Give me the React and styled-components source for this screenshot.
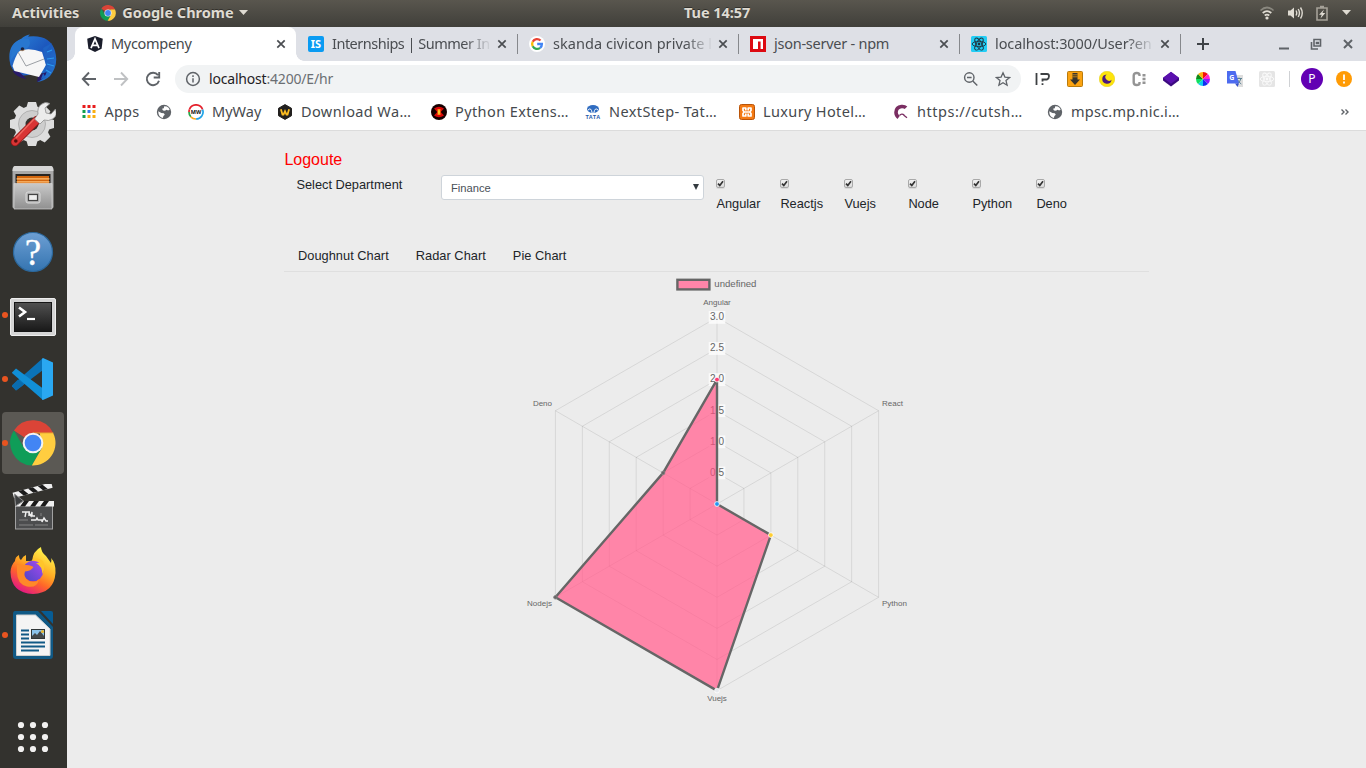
import React from "react";
import styled, { createGlobalStyle, css } from "styled-components";

const UI = '"Noto Sans", "Open Sans", sans-serif';
const ARIAL = '"Liberation Sans", Arial, sans-serif';

const Global = createGlobalStyle`
  * { box-sizing: border-box; }
  html, body { margin: 0; padding: 0; overflow: hidden; }
  svg { display: block; flex: none; }
`;

const Desktop = styled.div`
  width: 1366px;
  height: 768px;
  display: flex;
  flex-direction: column;
  background: #ececec;
  overflow: hidden;
  font-family: ${UI};
`;

/* ---------- system bar ---------- */
const SystemBar = styled.header`
  height: 27px;
  flex: none;
  display: grid;
  grid-template-columns: 672px auto 1fr;
  align-items: center;
  padding: 0 15px 2px 12px;
  background: linear-gradient(#59564e, #403f3a);
  color: #dfdbd2;
  font-weight: 700;
  font-size: 14.5px;
  line-height: 25px;
  text-shadow: 0 -1px 0 rgba(0, 0, 0, 0.4);
`;
const BarLeft = styled.div`
  display: flex;
  align-items: center;
`;
const AppName = styled.span`
  margin: 0 5px 0 6px;
`;
const AppIconSlot = styled.span`
  margin-left: 21px;
`;
const BarRight = styled.div`
  display: flex;
  align-items: center;
  justify-content: flex-end;
  gap: 12px;
`;
const MenuArrow = styled.span`
  margin-left: 2px;
`;
const Clock = styled.span`
  letter-spacing: -0.05px;
`;

const Workspace = styled.div`
  flex: 1;
  display: flex;
  min-height: 0;
`;

/* ---------- dock ---------- */
const Dock = styled.nav`
  width: 67px;
  flex: none;
  display: flex;
  flex-direction: column;
  gap: 2px;
  padding: 1px 3px 1px 2px;
  background: #33322e;
`;
const DockItem = styled.div`
  position: relative;
  height: 62px;
  flex: none;
  display: flex;
  align-items: center;
  justify-content: center;
  padding-top: ${(p) => p.$drop || 0}px;
  border-radius: 4px;
  background: ${(p) => (p.$active ? "#5b5954" : "transparent")};
  ${(p) => p.$last && css`margin-top: auto;`}
`;
const RunDot = styled.i`
  position: absolute;
  left: 0;
  top: 28px;
  width: 6px;
  height: 6px;
  border-radius: 50%;
  background: #e95420;
`;

/* ---------- browser ---------- */
const Browser = styled.main`
  flex: 1;
  min-width: 0;
  display: flex;
  flex-direction: column;
`;
const TabStrip = styled.div`
  height: 34px;
  flex: none;
  display: flex;
  align-items: center;
  padding-left: 8px;
  background: #dee0e6;
`;
const Tab = styled.div`
  position: relative;
  width: 221px;
  height: 34px;
  flex: none;
  display: flex;
  align-items: center;
  padding: 0 9px 0 12px;
  color: #4a4d51;
  ${(p) =>
    p.$active
      ? css`
          background: #fff;
          border-radius: 8px 8px 0 0;
          z-index: 1;
          color: #45494d;
          &::before,
          &::after {
            content: "";
            position: absolute;
            bottom: 0;
            width: 8px;
            height: 8px;
          }
          &::before {
            left: -8px;
            background: radial-gradient(circle at 0 0, transparent 7.5px, #fff 8px);
          }
          &::after {
            right: -8px;
            background: radial-gradient(circle at 100% 0, transparent 7.5px, #fff 8px);
          }
        `
      : css`
          &::after {
            content: "";
            position: absolute;
            right: -1px;
            top: 7px;
            width: 1px;
            height: 20px;
            background: #86888c;
          }
        `}
`;
const TabTitle = styled.span`
  flex: 1;
  min-width: 0;
  margin: 0 3px 0 8px;
  padding-bottom: 2px;
  white-space: nowrap;
  font-size: 14.5px;
  line-height: 22px;
  letter-spacing: ${(p) => p.$track || 0}px;
  ${(p) =>
    p.$fade &&
    css`
      mask-image: linear-gradient(90deg, #000 132px, transparent 160px);
    `}
`;
const NewTab = styled.div`
  margin-left: 16px;
`;
const WindowControls = styled.div`
  display: flex;
  gap: 20px;
  margin: 0 12px 0 auto;
  align-items: center;
`;
const Toolbar = styled.div`
  height: 36px;
  flex: none;
  display: flex;
  align-items: center;
  padding: 0 14px 0 14px;
  background: #fff;
`;
const NavButtons = styled.div`
  display: flex;
  gap: 16px;
  margin-right: 14px;
`;
const Omnibox = styled.div`
  width: 846px;
  height: 28px;
  display: flex;
  align-items: center;
  padding: 0 10px;
  border-radius: 14px;
  background: #f1f3f4;
`;
const Url = styled.span`
  flex: 1;
  margin-left: 8px;
  font-size: 14px;
  line-height: 22px;
  letter-spacing: -0.19px;
  color: #6b6f73;
`;
const Host = styled.b`
  font-weight: 400;
  color: #1f2124;
`;
const OmniActions = styled.div`
  display: flex;
  gap: 16px;
`;
const Extensions = styled.div`
  display: flex;
  gap: 16px;
  margin-left: 14px;
  align-items: center;
`;
const Divider = styled.i`
  width: 1px;
  height: 16px;
  margin: 0 11px 0 14px;
  background: #cfd1d4;
`;
const Avatar = styled.span`
  width: 22px;
  height: 22px;
  border-radius: 50%;
  background: #6200b3;
  color: #fff;
  font-size: 12px;
  line-height: 22px;
  text-align: center;
`;
const Alert = styled.span`
  margin-left: 13px;
`;
const Bookmarks = styled.div`
  height: 34px;
  flex: none;
  display: flex;
  padding: 0 15px 0 13.5px;
  background: #fff;
  border-bottom: 1px solid #dcdcdc;
`;
const Bookmark = styled.div`
  width: ${(p) => p.$w}px;
  height: 30px;
  flex: none;
  display: flex;
  align-items: center;
  gap: 8px;
  color: #45494d;
  font-size: 14.5px;
  white-space: nowrap;
  letter-spacing: ${(p) => p.$track || 0}px;
`;
const BookmarkText = styled.span`
  padding-bottom: 2px;
`;
const More = styled.div`
  margin: 9px 0 0 auto;
`;

/* ---------- page ---------- */
const Page = styled.section`
  width: 864.500px;
  margin-left: 217.400px;
  padding-top: 19px;
  font-family: ${ARIAL};
  color: #212529;
  font-size: 12.8px;
`;
const Logout = styled.a`
  display: block;
  height: 25px;
  font-size: 16px;
  line-height: 20px;
  color: #f00;
`;
const FilterRow = styled.div`
  display: flex;
  height: 67px;
  padding-left: 12px;
`;
const FieldLabel = styled.label`
  width: 144.600px;
  line-height: 19px;
`;
const Select = styled.div`
  width: 263px;
  height: 25px;
  display: flex;
  align-items: center;
  justify-content: space-between;
  padding: 1px 4px 0 9px;
  margin-right: 12.400px;
  background: #fff;
  border: 1px solid #ced4da;
  border-radius: 3px;
  font-size: 11.2px;
  color: #495057;
`;
const Caret = styled.span`
  margin-bottom: 3px;
`;
const Option = styled.div`
  width: 64px;
  padding-top: 4px;
  line-height: 19px;
`;
const Box = styled.span`
  display: block;
  width: 9px;
  height: 9px;
  margin-bottom: 6px;
  border: 1px solid #a9a9a9;
  border-radius: 2px;
  background: linear-gradient(#f1f1f1, #dcdcdc);
  box-shadow: 0 1px 0 rgba(0, 0, 0, 0.08);
`;
const ChartTabs = styled.div`
  display: flex;
  gap: 27px;
  height: 30px;
  padding-left: 13.600px;
  line-height: 28px;
  letter-spacing: 0.03px;
  border-bottom: 1px solid #dfdfdf;
`;
const ChartArea = styled.div`
  margin-left: -0.4px;
`;

/* ---------- small UI glyphs ---------- */
const Line = ({ s = 16, d, c = "#5f6368", w = 2, children, ...r }) => (
  <svg width={s} height={s} viewBox={`0 0 ${s} ${s}`} fill="none" stroke={c} strokeWidth={w} {...r}>
    {d && <path d={d} />}
    {children}
  </svg>
);

const Close = () => <Line s={12} d="M2.300 2.300l7.400 7.400M9.700 2.300l-7.400 7.400" c="#4a4d51" w={1.7} />;

const ChromeLogo = ({ s }) => (
  <svg width={s} height={s} viewBox="0 0 48 48">
    <path d="M24 24 4.1 11A23.5 23.5 0 0 1 45 13.5L24 14z" fill="#db4437" />
    <path d="M4.2 11A23.5 23.5 0 0 0 22.8 47.5L33 29 24 24 14.5 29z" fill="#0f9d58" />
    <path d="M45 13.5A23.5 23.5 0 0 1 22.8 47.5L33.5 29 31 13.5z" fill="#ffcd40" />
    <path d="M24 13.5h21.2" stroke="#e6a52e" strokeWidth="1" />
    <circle cx="24" cy="24" r="10.8" fill="#f4f4f4" />
    <circle cx="24" cy="24" r="8.7" fill="#4285f4" />
  </svg>
);

const Globe = () => (
  <svg width="16" height="16" viewBox="0 0 16 16">
    <circle cx="8" cy="8" r="7.2" fill="#5f6368" />
    <path d="M8.200 2.200l2.600.2q2 1 2.900 3l-1.500 1.200-1.700-.8-1.500 1-2-.3L6 4.800l1.800-.6z" fill="#fff" />
    <path d="M2.200 7.200l3.200 1.700 2.400.3 1 1.500-1.400 1.300-.5 2Q2.300 13.200 2.200 7.200z" fill="#fff" />
  </svg>
);

const ReactMark = ({ bg, fg }) => (
  <svg width="16" height="16" viewBox="0 0 16 16">
    <rect width="16" height="16" rx="1.5" fill={bg} />
    <g fill="none" stroke={fg} strokeWidth=".9">
      <ellipse cx="8" cy="8" rx="6.8" ry="2.7" />
      <ellipse cx="8" cy="8" rx="6.8" ry="2.7" transform="rotate(60 8 8)" />
      <ellipse cx="8" cy="8" rx="6.8" ry="2.7" transform="rotate(120 8 8)" />
    </g>
    <circle cx="8" cy="8" r="1.4" fill={fg} />
  </svg>
);

const Angular = () => (
  <svg width="16" height="16" viewBox="0 0 16 16">
    <path d="M8 0l7.8 2.7-1.2 10L8 16l-6.6-3.3L.2 2.7z" fill="#1a1d2b" />
    <path d="M4 12.2L8 3l4 9.2M5.6 9.4h4.8" fill="none" stroke="#fff" strokeWidth="1.7" />
  </svg>
);
const Internshala = () => (
  <svg width="16" height="16" viewBox="0 0 16 16">
    <rect width="16" height="16" rx="2" fill="#0a9bf2" />
    <text x="8" y="12" fontSize="11" fontWeight="700" textAnchor="middle" fill="#fff" fontFamily="Noto Sans">IS</text>
  </svg>
);
const Google = () => (
  <svg width="16" height="16" viewBox="0 0 16 16" fill="none" strokeWidth="2.3">
    <circle cx="8" cy="8" r="8" fill="#fff" />
    <path d="M11.5 4.5A4.9 4.9 0 0 0 3.7 5.7" stroke="#ea4335" />
    <path d="M3.7 5.7a4.9 4.9 0 0 0 0 4.6" stroke="#fbbc05" />
    <path d="M3.7 10.3a4.9 4.9 0 0 0 7.4 1.5" stroke="#34a853" />
    <path d="M8.2 8h4.7a4.9 4.9 0 0 1-1.7 3.8" stroke="#4285f4" />
  </svg>
);
const Npm = () => (
  <svg width="16" height="16" viewBox="0 0 16 16">
    <rect width="16" height="16" fill="#dd0a12" />
    <path d="M3 3h10v10h-2.4V5.5H8V13H3z" fill="#fff" />
  </svg>
);

const AppsGrid = () => (
  <svg width="16" height="16" viewBox="0 0 16 16">
    {["#e81c1c", "#e81c1c", "#e81c1c", "#12a050", "#3576f0", "#f9ae10", "#12a050", "#f9ae10", "#f9ae10"].map((c, i) => (
      <rect key={i} x={1.5 + (i % 3) * 5} y={1 + Math.floor(i / 3) * 5} width="3" height="3" fill={c} />
    ))}
  </svg>
);
const MyWayMark = () => (
  <svg width="16" height="16" viewBox="0 0 16 16" fill="none" strokeWidth="1.7">
    <path d="M1.4 5.5A7 7 0 0 1 14.6 5.5" stroke="#e5202b" />
    <path d="M14.6 5.5A7 7 0 0 1 8 15" stroke="#20a4e8" />
    <path d="M1 8A7 7 0 0 0 2.8 12.8" stroke="#25a84a" />
    <path d="M2.8 12.8A7 7 0 0 0 8 15" stroke="#f6aa21" />
    <path d="M1.4 5.5A7 7 0 0 0 1 8" stroke="#e5202b" />
    <text x="8" y="10.200" fontSize="6" fontWeight="700" textAnchor="middle" textLength="10.500" lengthAdjust="spacingAndGlyphs" fill="#111" stroke="none" fontFamily="Noto Sans">MW</text>
  </svg>
);
const WMark = () => (
  <svg width="16" height="16" viewBox="0 0 16 16">
    <path d="M8 .6l6.5 3.7v7.4L8 15.4l-6.5-3.7V4.3z" fill="#22201f" stroke="#22201f" strokeLinejoin="round" />
    <path d="M3.900 5.2l1.6 5.300h1L8 7.2l1.500 3.300h1l1.6-5.300" fill="none" stroke="#fcbc21" strokeWidth="1.800" />
  </svg>
);
const Hourglass = () => (
  <svg width="16" height="16" viewBox="0 0 16 16">
    <circle cx="8" cy="8" r="8" fill="#160000" />
    <path d="M3 4.500Q8 1 13 4.500L9.800 8 13 11.500Q8 15 3 11.500L6.200 8z" fill="#d90808" />
    <path d="M6.5 5h3v6h-3z" fill="#ff8a10" />
    <path d="M7.3 6.2h1.4v3.6H7.3z" fill="#ffe53a" />
  </svg>
);
const Tata = () => (
  <svg width="16" height="16" viewBox="0 0 16 16">
    <ellipse cx="8" cy="5" rx="6" ry="4" fill="#2f6cc0" />
    <path d="M2.800 6.300Q6 2.500 7.200 9M13.200 6.300Q10 2.500 8.800 9" fill="none" stroke="#fff" strokeWidth="1" />
    <text x=".5" y="15.200" fontSize="5.6" fontWeight="700" textLength="15" lengthAdjust="spacingAndGlyphs" fill="#2458a8" fontFamily="Liberation Sans">TATA</text>
  </svg>
);
const Xampp = () => (
  <svg width="16" height="16" viewBox="0 0 16 16">
    <rect x=".5" y=".5" width="15" height="15" rx="2" fill="#f47a13" stroke="#ba5408" />
    <g fill="none" stroke="#fff" strokeWidth="1.700" strokeLinejoin="round">
      <path d="M6.800 6.500V4H4v2.500L5.300 8 4 9.500V12h2.800V9.500M9.200 6.500V4H12v2.500L10.700 8 12 9.500V12H9.200V9.500M6 8h4" />
    </g>
  </svg>
);
const Cutshort = () => (
  <svg width="16" height="16" viewBox="0 0 16 16" fill="none" stroke="#7a2e62">
    <path d="M13 3.800Q11.500 2.200 8.500 2.500 3.200 3.200 3 8.200q0 3.300 2.600 5.300" strokeWidth="3.600" />
    <path d="M6.500 11.500q2.300-2.600 4.800-.3M10.500 11l3.500 2.800" strokeWidth="1.300" />
  </svg>
);

/* extension icons */
const ExtIP = () => <Line d="M1.500 2v12M5.500 3H12q2 0 2 2.200T12 8.500H7.500v2M7.500 12.200V14" c="#3d4043" w={1.8} />;
const ExtDown = () => (
  <svg width="16" height="16" viewBox="0 0 16 16">
    <rect x=".5" y=".5" width="15" height="15" rx="1" fill="#fba311" stroke="#b97b0c" />
    <path d="M5.500 2h5v6.500H13L8 14 3 8.500h2.500z" fill="#37342c" />
    <path d="M5.500 3.800h5M5.500 5.800h5" stroke="#fba311" strokeWidth=".7" />
  </svg>
);
const ExtMoon = () => (
  <svg width="16" height="16" viewBox="0 0 16 16">
    <circle cx="8" cy="8" r="7.800" fill="#fde40c" stroke="#d9c211" strokeWidth=".4" />
    <path d="M7.600 3.400A4.700 4.700 0 1 0 12.600 8.800 3.600 3.600 0 0 1 7.600 3.400z" fill="#4b1a80" />
  </svg>
);
const ExtC = () => (
  <svg width="16" height="16" viewBox="0 0 16 16" fill="none">
    <path d="M8.500 5V4q0-2-2.800-2T2.700 4.500v7Q2.700 14 5.700 14t2.800-2v-1" stroke="#949494" strokeWidth="2.400" />
    <path d="M11.500 3h3v2.500h-3zM11.500 6.800h3v2.500h-3zM11.500 10.600h3v2.500h-3z" fill="#949494" />
  </svg>
);
const ExtStack = () => (
  <svg width="16" height="16" viewBox="0 0 16 16">
    <path d="M0 7l8-6 8 6v2.500l-8 6-8-6z" fill="#3c0a80" />
    <path d="M0 6.800L8 .8l8 6-8 6z" fill="#5a10ae" />
  </svg>
);
const ExtWheel = () => (
  <svg width="16" height="16" viewBox="0 0 16 16">
    {["#f21010", "#ff20d0", "#8c18ff", "#1030f0", "#10cdf0", "#10e060", "#108a18", "#ffb010"].map((c, i) => {
      const a = ((i * 45 - 90) * Math.PI) / 180;
      const b = ((i * 45 - 45) * Math.PI) / 180;
      return <path key={i} fill={c} d={`M8 8L${8 + 7 * Math.cos(a)} ${8 + 7 * Math.sin(a)}A7 7 0 0 1 ${8 + 7 * Math.cos(b)} ${8 + 7 * Math.sin(b)}z`} />;
    })}
  </svg>
);
const ExtTranslate = () => (
  <svg width="16" height="16" viewBox="0 0 16 16">
    <path d="M7 4h9v12h-5z" fill="#dedede" />
    <path d="M9.500 7.500h5.500M12 6.500v1M14 7.500q-1 4-4 5M10.800 9q1 2.500 3.500 4" stroke="#5b8192" strokeWidth="1" fill="none" />
    <path d="M0 0h8.500L12 12.500H0z" fill="#4d6bef" />
    <path d="M8 12.500h4L10.500 16z" fill="#3752c8" />
    <text x="4.900" y="8.800" fontSize="7" fontWeight="700" textAnchor="middle" fill="#fff" fontFamily="Noto Sans">G</text>
  </svg>
);

/* ---------- dock icons ---------- */
const Thunderbird = () => (
  <svg width="50" height="50" viewBox="0 0 50 50">
    <defs>
      <linearGradient id="tb" x1="0" y1="0" x2="1" y2="1">
        <stop offset="0" stopColor="#2b86dc" />
        <stop offset=".5" stopColor="#1d58bd" />
        <stop offset="1" stopColor="#2679cf" />
      </linearGradient>
    </defs>
    <path d="M13 5Q17 1 22 .5l-2 2Q42 0 47 17q4 14-5 25-5 5-13 6 8-5 8-9L12 42Q2 36 1.500 26 0 10 13 5z" fill="url(#tb)" />
    <path d="M4.500 37q4 6.500 14 8l-8-8zM29 48q8-3 10-11l-9 5z" fill="#281a68" />
    <path d="M11 17q-4 6-6.500 15l2 5L31 43l7-12-4-13q-13-5-23-1z" fill="#f6f6f6" />
    <path d="M10 18l8 14 18-7" fill="none" stroke="#9b9fa4" strokeWidth="1" />
    <path d="M13 5Q5 9 4 17L2 28q6-10 10-11 13-3 9-12z" fill="#2877cf" />
    <path d="M35 14l9-5-6 8 8-1-7 6 8 1-9 4 9 3-9 3 6 4-9 2 3 5-5 1 5-14z" fill="#1f63c4" />
    <path d="M39 18l5-2M39 25l7-1M39 30l7 2M38 36l5 3" stroke="#2d9bee" strokeWidth="1.200" />
    <circle cx="14.500" cy="15" r="1.800" fill="#1b2340" />
    <path d="M12 16.500q3 .8 5-1" fill="none" stroke="#b38355" strokeWidth=".8" />
  </svg>
);
const Settings = () => (
  <svg width="46" height="46" viewBox="0 0 46 46">
    <g transform="translate(22 24)" fill="#dedede">
      {[0, 45, 90, 135].map((a) => <path key={a} d="M-5.500-17l1.500-5h8l1.500 5v34L4 22h-8l-1.500-5z" transform={`rotate(${a})`} />)}
      <circle r="18" />
    </g>
    <circle cx="22" cy="24" r="13.500" fill="#cecece" stroke="#b1b1b1" />
    <circle cx="22" cy="24" r="6.500" fill="#33322e" />
    <path d="M5 42L27 20" stroke="#8c1515" strokeWidth="8.500" strokeLinecap="round" />
    <path d="M5 42L27 20" stroke="#d83434" strokeWidth="6.800" strokeLinecap="round" />
    <path d="M6 38L24 19" stroke="#ee675f" strokeWidth="1.500" />
    <path d="M28 14q-1-6 3-9.500Q35 1 40 3.500L35 8l1 5 5 1 4.500-5Q48 16 42.500 19q-4 2.500-8.500 1l-4 4-5.500-5z" fill="#ececec" stroke="#8e8e8e" strokeWidth=".8" />
    <circle cx="5.800" cy="41" r="1.800" fill="#560e0e" />
  </svg>
);
const Files = () => (
  <svg width="44" height="46" viewBox="0 0 44 46">
    <defs><linearGradient id="cab" x2="0" y2="1"><stop stopColor="#c9c9c9" /><stop offset="1" stopColor="#909090" /></linearGradient></defs>
    <path d="M1.500 5q0-4 3-4h35q3 0 3 4v37q0 1-1 1h-39q-1 0-1-1z" fill="#a9a9a9" />
    <path d="M1.500 6Q2 1 4 1h36q2 0 2.500 5z" fill="#d6d6d6" />
    <path d="M4.500 9h35v11h-35z" fill="#292522" />
    <path d="M6 11h32v8H6z" fill="#d2660f" />
    <path d="M5.500 13.800h33M5.500 16.800h33" stroke="#ffc074" strokeWidth="1.300" />
    <path d="M3 18.500h38V44H3z" fill="url(#cab)" stroke="#d5d5d5" strokeWidth=".7" />
    <rect x="15" y="27" width="14" height="11" rx="2" fill="#b4b4b4" stroke="#dadada" />
    <rect x="17.500" y="29.500" width="9" height="6" fill="#eee" stroke="#444" strokeWidth="1.200" />
  </svg>
);
const Help = () => (
  <svg width="42" height="42" viewBox="0 0 42 42">
    <defs><linearGradient id="hp" x2="0" y2="1"><stop stopColor="#6d9fd4" /><stop offset="1" stopColor="#3474b0" /></linearGradient></defs>
    <circle cx="21" cy="21" r="19.500" fill="url(#hp)" stroke="#2c689c" strokeWidth="1.200" />
    <text x="21" y="33.500" fontSize="37" textAnchor="middle" fill="#fff" fontFamily="Liberation Serif" stroke="#fff" strokeWidth=".3">?</text>
  </svg>
);
const Terminal = () => (
  <svg width="46" height="38" viewBox="0 0 46 38">
    <defs><linearGradient id="tm" x2="0" y2="1"><stop stopColor="#505050" /><stop offset="1" stopColor="#191919" /></linearGradient></defs>
    <rect x=".5" y=".5" width="45" height="37" rx="1.500" fill="#d5d5d5" stroke="#eee" />
    <rect x="4" y="4" width="38" height="30" fill="#161616" />
    <rect x="5" y="5" width="36" height="28" fill="url(#tm)" />
    <path d="M9 9.500l6 4.500-6 4.500" fill="none" stroke="#fff" strokeWidth="2.600" />
    <path d="M17 21h8" stroke="#fff" strokeWidth="2.200" />
  </svg>
);
const VSCode = () => (
  <svg width="44" height="44" viewBox="0 0 44 44">
    <path d="M1 28.500L32 1v12L5 33.500z" fill="#0b73b8" />
    <path d="M1 15.500L5 11.500 32 31.500V43L1 16z" fill="#118fd7" />
    <path d="M1 28.500v1L5 33.500l8-6-6-5z" fill="#0a6caf" />
    <path d="M32 1l10 4.500v33L32 43q-1 0-1-1V2z" fill="#2aa8f2" />
  </svg>
);
const Clapper = () => (
  <svg width="44" height="48" viewBox="0 0 44 48">
    <rect x="4.500" y="19" width="37" height="26" fill="#4c4d4e" stroke="#a1a1a1" />
    <rect x="4" y="17" width="39" height="5.500" fill="#efefef" />
    <path d="M13 17h5l-4 5.500H9zM23 17h5l-4 5.500h-5zM33 17h5l-4 5.500h-5z" fill="#1b1b1b" />
    <g transform="rotate(-15 3 14)">
      <rect x="3" y="8.500" width="40" height="5.500" fill="#efefef" />
      <path d="M9 8.500h5l4 5.500h-5zM19 8.500h5l4 5.500h-5zM29 8.500h5l4 5.500h-5z" fill="#1b1b1b" />
    </g>
    <path d="M3.500 10l9 7-8 5z" fill="#3d3f40" stroke="#8d8d8d" />
    <path d="M11 28h8M15 28l-1 5M18 32v-3l2 3 1-4v4h3M20 36h5l1-2 1 2h4v2l2-4 2 3h2" fill="none" stroke="#eee" strokeWidth="1.400" />
    <path d="M8 36h9M8 41h14M24 41h13M30 29v3" stroke="#929292" strokeWidth=".8" />
  </svg>
);
const Firefox = () => (
  <svg width="46" height="48" viewBox="0 0 46 48">
    <defs>
      <linearGradient id="ff" x1=".8" y1=".1" x2=".3" y2="1"><stop stopColor="#fff24a" /><stop offset=".4" stopColor="#ffaa23" /><stop offset=".65" stopColor="#ff6529" /><stop offset="1" stopColor="#e31587" /></linearGradient>
      <linearGradient id="fp" x1="1" x2="0" y2="1"><stop stopColor="#a84af0" /><stop offset="1" stopColor="#4b45c5" /></linearGradient>
    </defs>
    <path d="M5 14Q5 10 9 8q0 4 2 5 2-4 5-5l0 6 6 0Q23 4 31 0q0 5 5 9l5 7q1-3 0-5Q46 16 45.500 26 44 46 23 47 1 46 .5 25 1 18 5 14z" fill="url(#ff)" />
    <circle cx="23" cy="24" r="10.300" fill="url(#fp)" />
    <path d="M7 18q12-1 16.500 2-2.500 4-8.500 4.500-2 5 3 9 7 3 11-1-2 9-12 7Q7 37 7 25z" fill="#ff8928" />
    <path d="M20 14q8-3 11 2l-5 0q7 4 6 11 4-7 1-13-6-5-13 0z" fill="#ffc52a" />
  </svg>
);
const Writer = () => (
  <svg width="40" height="48" viewBox="0 0 40 48">
    <path d="M2 0h23l15 16v29q0 3-3 3H3q-3 0-3-3V3q0-3 2-3z" fill="#105985" />
    <path d="M28 0h10q2 0 2 2v11z" fill="#075c94" />
    <path d="M3.500 4h19L37 18v26.500H3.500z" fill="#f4f4f4" stroke="#cfcfcf" />
    <path d="M8 19.500h8M8 23.500h8M8 27.500h8M8 31.500h24M8 35.500h24M8 39.500h18" stroke="#105985" strokeWidth="2" />
    <rect x="18.500" y="18.500" width="13" height="9" fill="#8cc3ea" stroke="#303638" />
    <path d="M19 27v-2l3-3 2 2 3-4 4 5v2z" fill="#44484a" />
    <circle cx="29.500" cy="20.500" r="1.500" fill="#ebb82a" />
  </svg>
);
const ShowApps = () => (
  <svg width="32" height="32" viewBox="0 0 32 32" fill="#f2f1f0">
    {[4, 16, 28].map((y) => [4, 16, 28].map((x) => <circle key={`${x}-${y}`} cx={x} cy={y} r="3.100" />))}
  </svg>
);

const dock = [
  { icon: <Thunderbird /> },
  { icon: <Settings />, up: true },
  { icon: <Files />, drop: 2 },
  { icon: <Help />, drop: 2 },
  { icon: <Terminal />, run: true, drop: 4 },
  { icon: <VSCode />, run: true },
  { icon: <ChromeLogo s={46} />, run: true, active: true },
  { icon: <Clapper />, drop: 2 },
  { icon: <Firefox /> },
  { icon: <Writer />, run: true },
];

const tabs = [
  { icon: <Angular />, title: "Mycompeny", track: -0.3, active: true },
  { icon: <Internshala />, title: "Internships | Summer In", track: -0.5, fade: true },
  { icon: <Google />, title: "skanda civicon private l", track: 0.05, fade: true },
  { icon: <Npm />, title: "json-server - npm", track: -0.25 },
  { icon: <ReactMark bg="#22cdf5" fg="#20333f" />, title: "localhost:3000/User?en", track: -0.1, fade: true },
];

const bookmarks = [
  { icon: <AppsGrid />, text: "Apps", w: 75.5, track: 0.2 },
  { icon: <Globe />, text: "", w: 32 },
  { icon: <MyWayMark />, text: "MyWay", w: 89 },
  { icon: <WMark />, text: "Download Wa…", w: 154, track: 0.4 },
  { icon: <Hourglass />, text: "Python Extens…", w: 154, track: 0.4 },
  { icon: <Tata />, text: "NextStep- Tat…", w: 154, track: 0.42 },
  { icon: <Xampp />, text: "Luxury Hotel…", w: 154, track: 0.36 },
  { icon: <Cutshort />, text: "https://cutsh…", w: 154, track: 0.52 },
  { icon: <Globe />, text: "mpsc.mp.nic.i…", w: 140, track: 0.24 },
];

/* ---------- radar chart ---------- */
const ChartText = styled.text`
  font-family: ${ARIAL};
  font-size: ${(p) => p.$size}px;
  fill: #666;
`;

const CX = 433;
const CY = 232;
const STEP = 31.1;
const at = (axis, value) => {
  const a = (axis * 60 - 90) * (Math.PI / 180);
  const r = value * 2 * STEP;
  return [CX + r * Math.cos(a), CY + r * Math.sin(a)];
};
const ring = (values) => values.map((v, i) => at(i, v).map((n) => n.toFixed(2)).join(",")).join(" ");
const scores = [2, 0, 1, 3, 3, 1];
const pointColors = ["#ff3d71", "#2196f3", "#ffce32", "#e7e9ed", "#666666", "#666666"];
const axes = [
  ["Angular", 433, 33, "middle"],
  ["React", 598, 134, "start"],
  ["Python", 598, 334, "start"],
  ["Vuejs", 433, 429, "middle"],
  ["Nodejs", 268, 334, "end"],
  ["Deno", 268, 134, "end"],
];

const RadarChart = () => (
  <svg width="864" height="440" viewBox="0 0 864 440">
    <rect x="393.400" y="7.800" width="32" height="9.600" fill="#ff85a9" stroke="#666" strokeWidth="2.400" />
    <ChartText $size={9.6} x="430.300" y="15">undefined</ChartText>
    <polygon points={ring(scores)} fill="#fff" />
    <g fill="none" stroke="#000" strokeOpacity=".1" strokeWidth=".9">
      {[0.5, 1, 1.5, 2, 2.5, 3].map((v) => <polygon key={v} points={ring(Array(6).fill(v))} />)}
      {axes.map((_, i) => {
        const [x, y] = at(i, 3);
        return <line key={i} x1={CX} y1={CY} x2={x} y2={y} />;
      })}
    </g>
    {[0.5, 1, 1.5, 2, 2.5, 3].map((v) => {
      const y = CY - v * 2 * STEP;
      return (
        <g key={v}>
          <rect x={CX - 8.3} y={y - 6.4} width="16.600" height="12.800" fill="#fff" fillOpacity=".75" />
          <ChartText $size={10} x={CX} y={Math.floor(y + 3.3)} textAnchor="middle">{v.toFixed(1)}</ChartText>
        </g>
      );
    })}
    {axes.map(([t, x, y, anchor]) => (
      <ChartText key={t} $size={8} x={x} y={y} textAnchor={anchor}>{t}</ChartText>
    ))}
    <polygon points={ring(scores)} fill="rgb(255,81,131)" fillOpacity=".7" stroke="#666" strokeWidth="2.400" strokeLinejoin="bevel" />
    {scores.map((v, i) => {
      const [x, y] = at(i, v);
      const plain = i > 3;
      return <circle key={i} cx={x} cy={y} r={plain ? 1.8 : 2.4} fill={pointColors[i]} stroke={plain ? "#888" : "#fff"} strokeWidth=".8" />;
    })}
  </svg>
);

export default function App() {
  return (
    <Desktop>
      <Global />
      <SystemBar>
        <BarLeft>
          <span>Activities</span>
          <AppIconSlot><ChromeLogo s={16} /></AppIconSlot>
          <AppName>Google Chrome</AppName>
          <svg width="9" height="5" viewBox="0 0 9 5"><path d="M0 0h9L4.500 5z" fill="#dfdbd2" /></svg>
        </BarLeft>
        <Clock>Tue 14:57</Clock>
        <BarRight>
          <svg width="16" height="14" viewBox="0 0 16 14" fill="none" stroke="#dfdbd2" strokeWidth="1.700">
            <path d="M1.500 4.500Q8-1.500 14.500 4.500" opacity=".4" />
            <path d="M3.700 7Q8 3.200 12.300 7M5.700 9.500Q8 7.700 10.300 9.500" />
            <circle cx="8" cy="12" r="1.600" fill="#dfdbd2" stroke="none" />
          </svg>
          <svg width="17" height="16" viewBox="0 0 17 16" fill="none" stroke="#dfdbd2" strokeWidth="1.400">
            <path d="M1 5.500h2.500L7 2.500v11L3.500 10.500H1z" fill="#dfdbd2" stroke="none" />
            <path d="M9 5.500q1.500 2.500 0 5M11.200 4q2.500 4 0 8M13.500 2.500q3.500 5.500 0 11" />
          </svg>
          <svg width="12" height="16" viewBox="0 0 12 16" fill="none" stroke="#a5a198" strokeWidth="1.600">
            <path d="M4 1.500h4M1 3h10v12H1z" />
            <path d="M8 4.500L3 9.800h2.700L4.500 13.500 9.300 8H6.500z" fill="#dfdbd2" stroke="none" />
          </svg>
          <MenuArrow>
            <svg width="9" height="5" viewBox="0 0 9 5"><path d="M0 0h9L4.500 5z" fill="#dfdbd2" /></svg>
          </MenuArrow>
        </BarRight>
      </SystemBar>
      <Workspace>
        <Dock>
          {dock.map((d, i) => (
            <DockItem key={i} $active={d.active} $drop={d.drop}>
              {d.run && <RunDot />}
              {d.icon}
            </DockItem>
          ))}
          <DockItem $last $drop={1}><ShowApps /></DockItem>
        </Dock>
        <Browser>
          <TabStrip>
            {tabs.map((t) => (
              <Tab key={t.title} $active={t.active}>
                {t.icon}
                <TabTitle $track={t.track} $fade={t.fade}>{t.title}</TabTitle>
                <Close />
              </Tab>
            ))}
            <NewTab><Line s={14} d="M7 1v12M1 7h12" c="#3f4347" /></NewTab>
            <WindowControls>
              <Line s={12} d="M1 10.500h10" c="#5f6368" />
              <Line s={12} w={1.600} d="M4 1.500h6.500v6.500H4zM1.500 4v7H8M6.500 4.500h1.800v1H6.500z" />
              <Line s={12} d="M2 2l8 8M10 2l-8 8" />
            </WindowControls>
          </TabStrip>
          <Toolbar>
            <NavButtons>
              <Line d="M15 8H2M8 1.500L1.800 8 8 14.500" w={1.900} />
              <Line d="M1 8h13M8 1.500L14.200 8 8 14.500" w={1.900} c="#bfc1c3" />
              <Line d="M13 4.200A6.200 6.200 0 1 0 14 9.800M14.200 1v5.500H8.700" w={1.900} />
            </NavButtons>
            <Omnibox>
              <Line w={1.500}>
                <circle cx="8" cy="8" r="6.400" />
                <path d="M8 7.200v4.300M8 4.200v1.700" />
              </Line>
              <Url><Host>localhost</Host>:4200/E/hr</Url>
              <OmniActions>
                <Line w={1.400}>
                  <circle cx="6.300" cy="6.500" r="4.700" />
                  <path d="M9.800 10l4.500 4.500M4 6.500h4.600" />
                </Line>
                <Line w={1.300} d="M8 1.800l1.900 4.300 4.700.4-3.600 3.100 1.100 4.600L8 11.800l-4.100 2.400L5 9.600 1.400 6.500l4.700-.4z" />
              </OmniActions>
            </Omnibox>
            <Extensions>
              <ExtIP /><ExtDown /><ExtMoon /><ExtC /><ExtStack /><ExtWheel /><ExtTranslate />
              <ReactMark bg="#e5e5e5" fg="#fafafa" />
            </Extensions>
            <Divider />
            <Avatar>P</Avatar>
            <Alert>
              <svg width="16" height="16" viewBox="0 0 16 16">
                <circle cx="8" cy="8" r="8" fill="#ff9b05" />
                <path d="M8 3.500V9M8 10.500v2" stroke="#fff" strokeWidth="1.800" />
              </svg>
            </Alert>
          </Toolbar>
          <Bookmarks>
            {bookmarks.map((b, i) => (
              <Bookmark key={i} $w={b.w} $track={b.track}>
                {b.icon}
                {b.text && <BookmarkText>{b.text}</BookmarkText>}
              </Bookmark>
            ))}
            <More><Line s={12} w={1.400} d="M2.500 3.500L5 6 2.500 8.500M6.500 3.500L9 6 6.500 8.500" /></More>
          </Bookmarks>
          <Page>
            <Logout>Logoute</Logout>
            <FilterRow>
              <FieldLabel>Select Department</FieldLabel>
              <Select>
                <span>Finance</span>
                <Caret>
                  <svg width="6" height="6" viewBox="0 0 6 6"><path d="M0 0h6L3 6z" fill="#343a40" /></svg>
                </Caret>
              </Select>
              {["Angular", "Reactjs", "Vuejs", "Node", "Python", "Deno"].map((o) => (
                <Option key={o}>
                  <Box>
                    <svg width="7" height="7" viewBox="0 0 7 7"><path d="M1 3.600l1.800 1.800L6 1.300" fill="none" stroke="#333" strokeWidth="1.700" /></svg>
                  </Box>
                  {o}
                </Option>
              ))}
            </FilterRow>
            <ChartTabs>
              <span>Doughnut Chart</span>
              <span>Radar Chart</span>
              <span>Pie Chart</span>
            </ChartTabs>
            <ChartArea>
              <RadarChart />
            </ChartArea>
          </Page>
        </Browser>
      </Workspace>
    </Desktop>
  );
}
